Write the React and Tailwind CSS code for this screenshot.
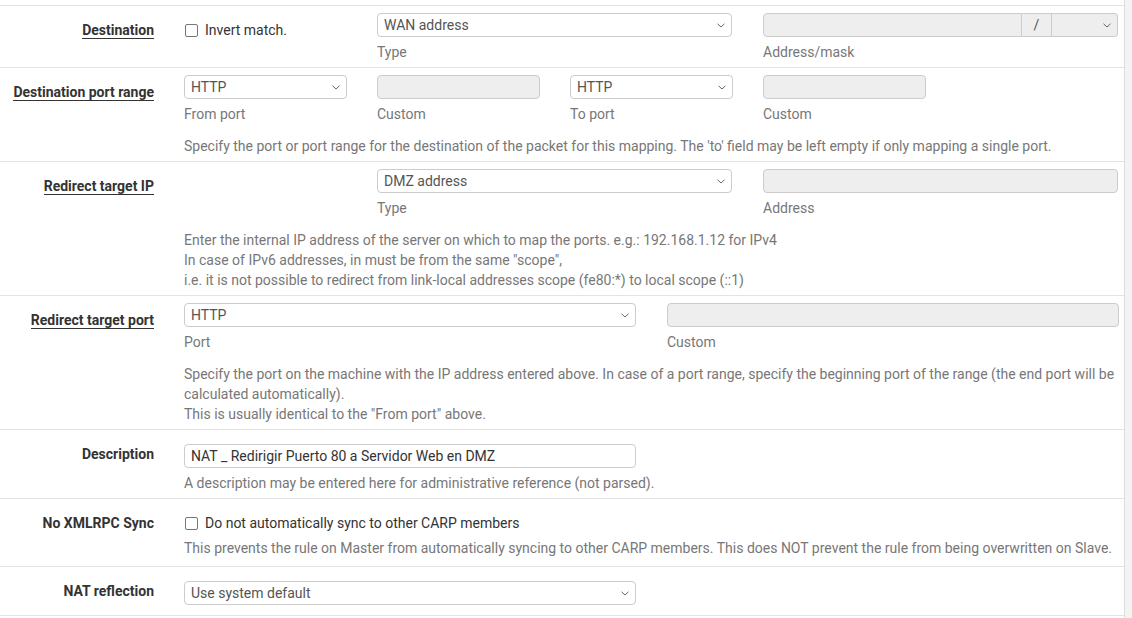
import React from 'react';

function Chevron() {
    return (
        <svg width="8" height="5" viewBox="0 0 8 5" className="shrink-0">
            <path d="M0.5 0.8 L4 4 L7.5 0.8" fill="none" stroke="#666" strokeWidth="1" />
        </svg>
    );
}

function Select({ value, w }) {
    return (
        <div className={`${w} h-6 flex items-center justify-between border border-[#ccc] rounded-[4px] bg-white pl-[6px] pr-[6px] text-[#555]`}>
            <span className="leading-5">{value}</span>
            <Chevron />
        </div>
    );
}

function Disabled({ w }) {
    return <div className={`${w} h-6 border border-[#ccc] rounded-[4px] bg-[#eee]`}></div>;
}

function Sub({ children }) {
    return <div className="mt-[5px] leading-5 text-[#777]">{children}</div>;
}

function Checkbox() {
    return <span className="inline-block w-[13px] h-[13px] ml-px mr-[7px] border border-[#767676] rounded-[2px] bg-white"></span>;
}

function Row({ label, underline, className, children }) {
    return (
        <div className="flex border-b border-[#e3e3e3]">
            <div className="w-[169px] shrink-0 pt-[14px] pr-[15px] text-right font-bold text-[#333] leading-5">
                {underline ? <span className="border-b border-[#333]">{label}</span> : label}
            </div>
            <div className={`flex-1 pl-[15px] ${className}`}>{children}</div>
        </div>
    );
}

function Help({ lines }) {
    return (
        <div className="mt-[12px] leading-5 text-[#777]">
            {lines.map((l, i) => (
                <div key={i} className="whitespace-nowrap">{l}</div>
            ))}
        </div>
    );
}

export default function App() {
    return (
        <div className="w-[1132px] h-[618px] overflow-hidden bg-[#f3f3f3] font-[Roboto,sans-serif] text-[14px]">
            <div className="w-[1125px] h-full bg-white border-r border-[#ddd]">
                <div className="h-[6px] border-b border-[#e3e3e3]"></div>

                {/* Destination */}
                <Row label="Destination" underline className="pt-[7px] pb-[5px]">
                    <div className="flex items-start gap-[30px]">
                        <div className="w-[163px] h-5 mt-[7px] flex items-center leading-5 text-[#333]">
                            <Checkbox />
                            Invert match.
                        </div>
                        <div className="w-[355px]">
                            <Select value="WAN address" w="w-[355px]" />
                            <Sub>Type</Sub>
                        </div>
                        <div className="w-[355px] ml-px">
                            <div className="flex h-6 w-[355px]">
                                <div className="flex-1 border border-[#ccc] rounded-l-[4px] bg-[#eee]"></div>
                                <div className="w-[30px] flex items-center justify-center border-y border-r border-[#ccc] bg-[#eee] text-[#555]">/</div>
                                <div className="w-[66px] flex items-center justify-end pr-[6px] border-y border-r border-[#ccc] rounded-r-[4px] bg-[#eee]">
                                    <Chevron />
                                </div>
                            </div>
                            <Sub>Address/mask</Sub>
                        </div>
                    </div>
                </Row>

                {/* Destination port range */}
                <Row label="Destination port range" underline className="pt-[7px] pb-[5px]">
                    <div className="flex gap-[30px]">
                        <div className="w-[163px]">
                            <Select value="HTTP" w="w-[163px]" />
                            <Sub>From port</Sub>
                        </div>
                        <div className="w-[163px]">
                            <Disabled w="w-[163px]" />
                            <Sub>Custom</Sub>
                        </div>
                        <div className="w-[163px]">
                            <Select value="HTTP" w="w-[163px]" />
                            <Sub>To port</Sub>
                        </div>
                        <div className="w-[163px]">
                            <Disabled w="w-[163px]" />
                            <Sub>Custom</Sub>
                        </div>
                    </div>
                    <Help lines={["Specify the port or port range for the destination of the packet for this mapping. The 'to' field may be left empty if only mapping a single port."]} />
                </Row>

                {/* Redirect target IP */}
                <Row label="Redirect target IP" underline className="pt-[7px] pb-[5px]">
                    <div className="flex gap-[30px]">
                        <div className="w-[163px]"></div>
                        <div className="w-[355px]">
                            <Select value="DMZ address" w="w-[355px]" />
                            <Sub>Type</Sub>
                        </div>
                        <div className="w-[355px] ml-px">
                            <Disabled w="w-[355px]" />
                            <Sub>Address</Sub>
                        </div>
                    </div>
                    <Help
                        lines={[
                            'Enter the internal IP address of the server on which to map the ports. e.g.: 192.168.1.12 for IPv4',
                            'In case of IPv6 addresses, in must be from the same "scope",',
                            'i.e. it is not possible to redirect from link-local addresses scope (fe80:*) to local scope (::1)',
                        ]}
                    />
                </Row>

                {/* Redirect target port */}
                <Row label="Redirect target port" underline className="pt-[7px] pb-[5px]">
                    <div className="flex gap-[30px]">
                        <div className="w-[452px]">
                            <Select value="HTTP" w="w-[452px]" />
                            <Sub>Port</Sub>
                        </div>
                        <div className="w-[452px] ml-px">
                            <Disabled w="w-[452px]" />
                            <Sub>Custom</Sub>
                        </div>
                    </div>
                    <Help
                        lines={[
                            'Specify the port on the machine with the IP address entered above. In case of a port range, specify the beginning port of the range (the end port will be',
                            'calculated automatically).',
                            'This is usually identical to the "From port" above.',
                        ]}
                    />
                </Row>

                {/* Description */}
                <Row label="Description" className="pt-[14px] pb-[5px]">
                    <div className="w-[452px] h-6 flex items-center border border-[#ccc] rounded-[4px] bg-white pl-[6px] text-[#333]">
                        NAT _ Redirigir Puerto 80 a Servidor Web en DMZ
                    </div>
                    <Sub>A description may be entered here for administrative reference (not parsed).</Sub>
                </Row>

                {/* No XMLRPC Sync */}
                <Row label="No XMLRPC Sync" className="pt-[14px] pb-[8px]">
                    <div className="flex items-center leading-5 text-[#333]">
                        <Checkbox />
                        Do not automatically sync to other CARP members
                    </div>
                    <Sub>This prevents the rule on Master from automatically syncing to other CARP members. This does NOT prevent the rule from being overwritten on Slave.</Sub>
                </Row>

                {/* NAT reflection */}
                <Row label="NAT reflection" className="pt-[14px] pb-[10px]">
                    <Select value="Use system default" w="w-[452px]" />
                </Row>
            </div>
        </div>
    );
}
